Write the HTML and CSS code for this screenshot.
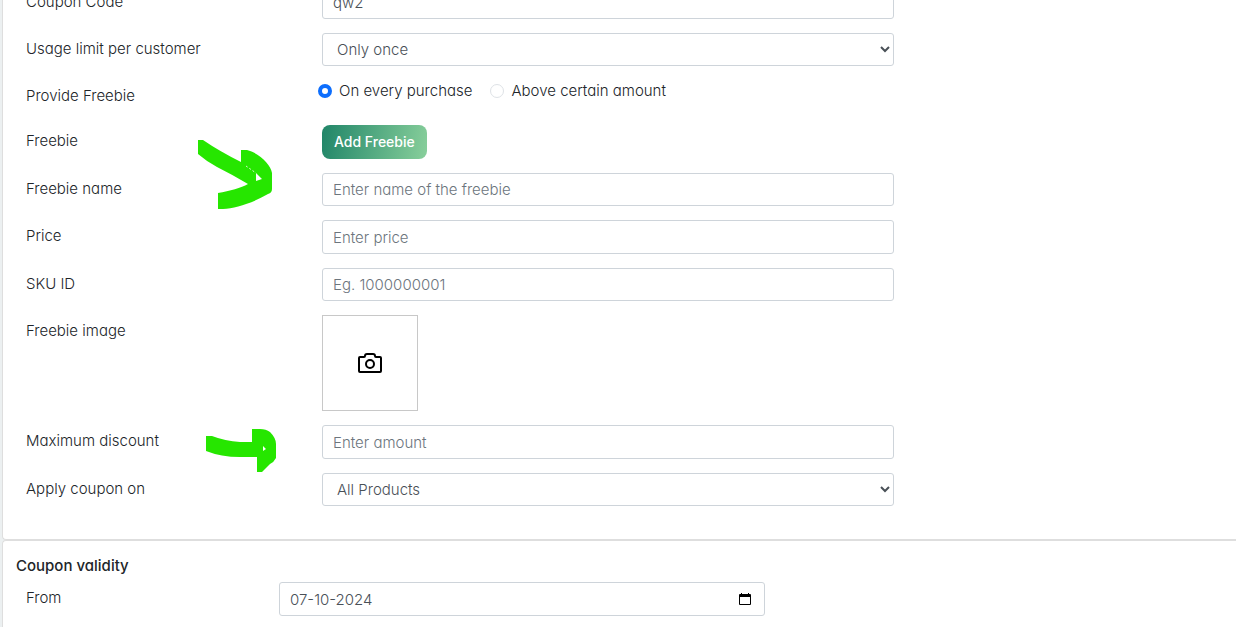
FILE: index.html
```html
<!doctype html>
<html lang="en">
<head>
    <meta charset="UTF-8">
    <meta name="viewport" content="width=device-width, initial-scale=1.0">
    <title>Coupon</title>
    <link rel="stylesheet" href="styles.css">
</head>
<body>
<form class="page">
    <section class="card card_details">
        <div class="row">
            <label class="row_label" for="code">Coupon Code</label>
            <input class="control" id="code" type="text" value="qw2">
        </div>
        <div class="row">
            <label class="row_label" for="limit">Usage limit per customer</label>
            <select class="control" id="limit">
                <option>Only once</option>
                <option>Unlimited</option>
            </select>
        </div>
        <div class="row row_radio" role="radiogroup" aria-labelledby="provide">
            <span class="row_label" id="provide">Provide Freebie</span>
            <div class="radios">
                <label class="radio"><input type="radio" name="provide" checked>On every purchase</label>
                <label class="radio"><input type="radio" name="provide">Above certain amount</label>
            </div>
        </div>
        <div class="row">
            <span class="row_label">Freebie</span>
            <div>
                <button class="btn" type="button">Add Freebie</button>
            </div>
            <svg class="arrow arrow_freebie" width="75" height="69" viewBox="0 0 75 69" aria-hidden="true">
                <path fill-rule="evenodd" d="M1 0H6Q22 11 44 22V10H50C62 13 74 25 75 33V49Q75 53 71 54C54 64 38 68 26 69H21V53C33 51 44 48 51 44Q36 35 20 27Q9 21 1 14ZM59 33V41L65 39Z"/>
                <path class="arrow_gap" d="M49 26L59 33"/>
            </svg>
        </div>
        <div class="row">
            <label class="row_label" for="name">Freebie name</label>
            <input class="control" id="name" type="text" placeholder="Enter name of the freebie">
        </div>
        <div class="row">
            <label class="row_label" for="price">Price</label>
            <input class="control control_number" id="price" type="number" placeholder="Enter price">
        </div>
        <div class="row">
            <label class="row_label" for="sku">SKU ID</label>
            <input class="control" id="sku" type="text" placeholder="Eg. 1000000001">
        </div>
        <div class="row">
            <span class="row_label">Freebie image</span>
            <button class="upload" type="button" aria-label="Upload freebie image">
                <svg width="24" height="20" viewBox="0 0 24 20">
                    <path d="M2 4H6Q7 4 7 3Q7 1 9 1H15Q17 1 17 3Q17 4 18 4H22Q23 4 23 5V18Q23 19 22 19H2Q1 19 1 18V5Q1 4 2 4Z"/>
                    <circle cx="12" cy="11" r="4"/>
                </svg>
            </button>
        </div>
        <div class="row">
            <label class="row_label" for="discount">Maximum discount</label>
            <input class="control control_number" id="discount" type="number" placeholder="Enter amount">
            <svg class="arrow arrow_discount" width="71" height="45" viewBox="0 0 71 45" aria-hidden="true">
                <path fill-rule="evenodd" d="M0 8H6Q19 13 34 14H46V1H54Q60 1 64 4Q70 10 70 16V30Q68 34 64 36L56 44H51V29H34Q15 29 0 23ZM57 18V23L60 21Z"/>
            </svg>
        </div>
        <div class="row">
            <label class="row_label" for="apply">Apply coupon on</label>
            <select class="control" id="apply">
                <option>All Products</option>
                <option>Selected Products</option>
            </select>
        </div>
    </section>
    <section class="card card_validity">
        <h2 class="card_title">Coupon validity</h2>
        <div class="row row_date">
            <label class="row_label" for="from">From</label>
            <div class="date">
                <input class="control control_date" id="from" type="text" value="07-10-2024">
                <button class="date_btn" type="button" aria-label="Open calendar">
                    <svg width="12" height="14" viewBox="0 0 12 14">
                        <path fill-rule="evenodd" d="M2 1H3V2H9V1H10V2H11Q12 2 12 3V12Q12 13 11 13H1Q0 13 0 12V3Q0 2 1 2H2ZM1 5V12H11V5Z"/>
                    </svg>
                </button>
            </div>
        </div>
    </section>
</form>
</body>
</html>
```
FILE: styles.css
```css
* {
    box-sizing: border-box;
}

body {
    margin: 0;
    background-color: #ecf0f1;
    font-family: Inter, "Liberation Sans", sans-serif;
    font-feature-settings: "cv11";
    font-size: 15px;
    font-weight: 300;
    line-height: 22px;
    color: #212529;
    overflow: hidden;
}

input,
select,
button {
    margin: 0;
    font: inherit;
    font-feature-settings: inherit;
}

/* the form is scrolled a little, its first row is cut by the window */
.page {
    margin-top: -15px;
    padding-left: 2px;
}

.card {
    background-color: #fff;
    border: 1px solid #dedede;
    border-right: 0;
    border-radius: 4px 0 0 4px;
}

.card_details {
    display: flex;
    flex-direction: column;
    gap: 14px;
    padding: 0 0 33px 23px;
}

.card_validity {
    padding: 14px 0 11px 23px;
    border-bottom: 0;
    border-bottom-left-radius: 0;
}

.card_title {
    margin: 0 0 5px -10px;
    font-size: 15px;
    font-weight: 500;
}

.row {
    position: relative;
    display: grid;
    grid-template-columns: 296fr 572fr 342fr;
    align-items: start;
}

.row_radio {
    min-height: 31px;
}

.row_date {
    grid-template-columns: 253fr 486fr 471fr;
}

.row_label {
    padding-top: 5px;
}

.control {
    width: 100%;
    height: 33px;
    padding: 0 10px;
    border: 1px solid #ced4da;
    border-radius: 3px;
    background-color: #fff;
    color: #495057;
}

.control::placeholder {
    color: #6c757d;
}

.control_number,
.control_date {
    height: 34px;
}

.control:focus {
    border-color: #80bdff;
    outline: none;
}

.radios {
    display: flex;
    gap: 18px;
    margin-left: -4px;
}

.radio {
    display: flex;
    align-items: center;
    gap: 7px;
}

.radio input {
    appearance: none;
    width: 14px;
    height: 14px;
    border: 1px solid #dee2e6;
    border-radius: 50%;
    background-color: #fff;
}

.radio input:checked {
    border: 4px solid #0d6efd;
}

.btn {
    display: block;
    height: 34px;
    padding: 0 12px;
    border: 0;
    border-radius: 8px;
    background: linear-gradient(100deg, #208568, #88cf9b);
    color: #fff;
    font-size: 14px;
    font-weight: 500;
    cursor: pointer;
}

.upload {
    display: flex;
    justify-content: center;
    align-items: center;
    width: 96px;
    height: 96px;
    padding: 0;
    border: 1px solid #c8c8c8;
    background-color: #fff;
    cursor: pointer;
}

.upload svg {
    fill: none;
    stroke: #000;
    stroke-width: 2;
}

.date {
    position: relative;
}

.date_btn {
    position: absolute;
    top: 9px;
    right: 13px;
    display: flex;
    padding: 1px;
    border: 0;
    background: none;
    cursor: pointer;
}

.arrow {
    position: absolute;
    fill: #26e600;
    pointer-events: none;
}

.arrow_freebie {
    left: 171px;
    top: 15px;
    z-index: 1;
}

.arrow_discount {
    left: 180px;
    top: 3px;
}

.arrow_gap {
    stroke: #d4facc;
    stroke-dasharray: 2 2;
}
```
